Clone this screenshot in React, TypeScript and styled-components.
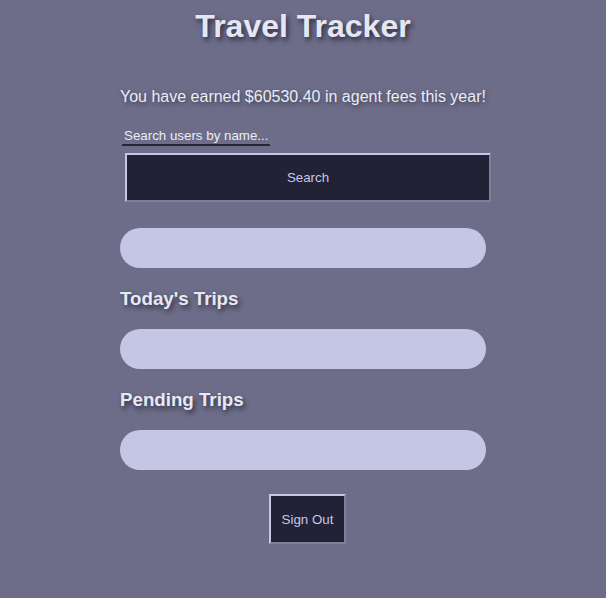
import React from 'react'
import styled, { createGlobalStyle } from 'styled-components'

const GlobalStyle = createGlobalStyle`
  html, body {
    margin: 0;
    padding: 0;
    background-color: #6d6d89;
  }
  body {
    font-family: "Liberation Sans", Arial, Helvetica, sans-serif;
    min-height: 598px;
  }
`

const App = () => {
  return (
    <>
      <GlobalStyle />
      <Page>
        <Title>Travel Tracker</Title>
        <Main>
          <Earned>You have earned $60530.40 in agent fees this year!</Earned>
          <SearchForm onSubmit={(e) => e.preventDefault()}>
            <SearchInput type="text" placeholder="Search users by name..." />
            <DarkButton type="submit" wide>Search</DarkButton>
          </SearchForm>
          <Pill />
          <Heading>Today's Trips</Heading>
          <Pill />
          <Heading>Pending Trips</Heading>
          <Pill />
          <Footer>
            <DarkButton type="button">Sign Out</DarkButton>
          </Footer>
        </Main>
      </Page>
    </>
  )
}

export default App

const Page = styled.div`
  width: 100%;
  padding-top: 8px;
  display: flex;
  flex-direction: column;
  align-items: center;
`

const Title = styled.h1`
  margin: 0;
  font-size: 32px;
  line-height: 37px;
  font-weight: 700;
  color: #e6e6f2;
  text-shadow: 2px 3px 5px rgba(20, 20, 40, 0.75);
`

const Main = styled.div`
  width: 366px;
  display: flex;
  flex-direction: column;
  padding-top: 42px;
`

const Earned = styled.p`
  margin: 0;
  font-size: 16px;
  line-height: 19px;
  color: #ececf4;
  white-space: nowrap;
  text-shadow: 1px 2px 4px rgba(20, 20, 40, 0.55);
`

const SearchForm = styled.form`
  display: flex;
  flex-direction: column;
  align-items: flex-start;
  margin-top: 20px;
`

const SearchInput = styled.input`
  width: 148px;
  margin-left: 2px;
  padding: 2px 2px 0;
  font-family: "Liberation Sans", Arial, sans-serif;
  font-size: 13.33px;
  line-height: 16px;
  color: #ececf4;
  background: transparent;
  border: none;
  border-bottom: 2px solid #24243a;
  outline: none;
  box-sizing: border-box;

  &::placeholder {
    color: #ececf4;
    opacity: 1;
  }
`

const DarkButton = styled.button<{ wide?: boolean }>`
  display: flex;
  align-items: center;
  justify-content: center;
  width: ${({ wide }) => (wide ? '366px' : '77px')};
  height: ${({ wide }) => (wide ? '49px' : '50px')};
  margin: ${({ wide }) => (wide ? '7px 0 0 5px' : '0')};
  padding: 0;
  font-family: "Liberation Sans", Arial, sans-serif;
  font-size: 13.33px;
  color: #c6c7e6;
  background-color: #222236;
  border: 2px outset #c6c7e8;
  box-sizing: border-box;
  cursor: pointer;
`

const Pill = styled.div`
  width: 366px;
  height: 40px;
  border-radius: 20px;
  background-color: #c5c6e5;
  margin-top: 26px;

  & + h3 + & {
    margin-top: 20px;
  }
`

const Heading = styled.h3`
  margin: 20px 0 0;
  font-size: 18.72px;
  line-height: 21px;
  font-weight: 700;
  color: #e8e8f2;
  text-shadow: 2px 3px 5px rgba(20, 20, 40, 0.7);
`

const Footer = styled.div`
  display: flex;
  justify-content: center;
  padding-left: 9px;
  margin-top: 24px;
`
